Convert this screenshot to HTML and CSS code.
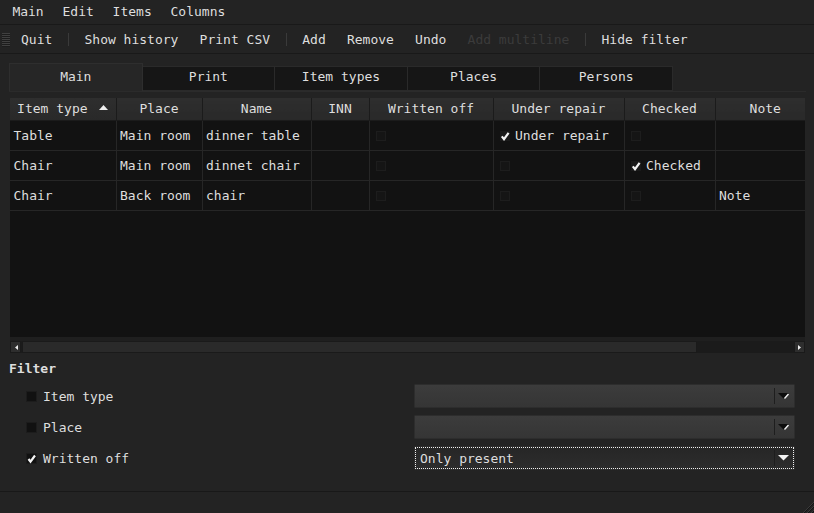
FILE: index.html
```html
<!DOCTYPE html>
<html>
<head>
<meta charset="utf-8">
<link rel="stylesheet" href="styles.css">
</head>
<body>
<div class="menubar">
  <span class="menu">Main</span><span class="menu">Edit</span><span class="menu">Items</span><span class="menu">Columns</span>
</div>
<div class="toolbar">
  <span class="grip"></span>
  <span class="tb">Quit</span><span class="sep"></span>
  <span class="tb">Show history</span><span class="tb">Print CSV</span><span class="sep"></span>
  <span class="tb">Add</span><span class="tb">Remove</span><span class="tb">Undo</span><span class="tb disabled">Add multiline</span><span class="sep"></span>
  <span class="tb">Hide filter</span>
</div>
<div class="tabs">
  <div class="tab active">Main</div>
  <div class="tab">Print</div>
  <div class="tab">Item types</div>
  <div class="tab">Places</div>
  <div class="tab">Persons</div>
</div>
<div class="pane">
  <div class="frame">
    <div class="viewport">
      <table class="grid">
        <colgroup>
          <col class="c1"><col class="c2"><col class="c3"><col class="c4"><col class="c5"><col class="c6"><col class="c7"><col class="c8">
        </colgroup>
        <thead>
          <tr>
            <th>Item type <svg class="sort" width="9" height="5" viewBox="0 0 9 5"><polygon points="0,5 9,5 4.5,0" fill="#f0f0f0"/></svg></th>
            <th>Place</th><th>Name</th><th>INN</th><th>Written off</th><th>Under repair</th><th>Checked</th><th>Note</th>
          </tr>
        </thead>
        <tbody>
          <tr>
            <td>Table</td><td>Main room</td><td>dinner table</td><td></td>
            <td><span class="cb"></span></td>
            <td><span class="cb on"><svg width="10" height="10" viewBox="0 0 10 10"><path d="M1.8 5.4 L4 8.2 L8.6 1.8" stroke="#f4f4f4" stroke-width="2.2" fill="none"/></svg></span><span class="cbl">Under repair</span></td>
            <td><span class="cb"></span></td><td></td>
          </tr>
          <tr>
            <td>Chair</td><td>Main room</td><td>dinnet chair</td><td></td>
            <td><span class="cb"></span></td>
            <td><span class="cb"></span></td>
            <td><span class="cb on"><svg width="10" height="10" viewBox="0 0 10 10"><path d="M1.8 5.4 L4 8.2 L8.6 1.8" stroke="#f4f4f4" stroke-width="2.2" fill="none"/></svg></span><span class="cbl">Checked</span></td>
            <td></td>
          </tr>
          <tr>
            <td>Chair</td><td>Back room</td><td>chair</td><td></td>
            <td><span class="cb"></span></td>
            <td><span class="cb"></span></td>
            <td><span class="cb"></span></td>
            <td>Note</td>
          </tr>
        </tbody>
      </table>
      <div class="filler"></div>
    </div>
    <div class="hscroll">
      <span class="sbtn"><svg width="4" height="5" viewBox="0 0 4 5"><polygon points="4,0 4,5 1,2.5" fill="#eee"/></svg></span>
      <span class="track"><span class="thumb"></span></span>
      <span class="sbtn"><svg width="4" height="5" viewBox="0 0 4 5"><polygon points="0,0 0,5 3,2.5" fill="#eee"/></svg></span>
    </div>
  </div>
</div>
<div class="filter">
  <div class="ftitle">Filter</div>
  <div class="fgrid">
    <label class="fcheck"><span class="fcb"></span>Item type</label>
    <div class="combo"><span class="ctext"></span><span class="cdiv"></span><svg class="carrow" width="11" height="6" viewBox="0 0 11 6"><polygon points="0,0 11,0 5.5,5.5" fill="#0c0c0c"/><path d="M6.5 5.5 L10.5 1" stroke="#f0f0f0" stroke-width="1.4"/></svg></div>
    <label class="fcheck"><span class="fcb"></span>Place</label>
    <div class="combo"><span class="ctext"></span><span class="cdiv"></span><svg class="carrow" width="11" height="6" viewBox="0 0 11 6"><polygon points="0,0 11,0 5.5,5.5" fill="#0c0c0c"/><path d="M6.5 5.5 L10.5 1" stroke="#f0f0f0" stroke-width="1.4"/></svg></div>
    <label class="fcheck"><span class="fcb"><svg width="11" height="11" viewBox="0 0 11 11"><path d="M2.5 6 L4.5 8.6 L9 2.5" stroke="#f4f4f4" stroke-width="2.2" fill="none"/></svg></span>Written off</label>
    <div class="combo focus"><span class="ctext">Only present</span><span class="cdiv"></span><svg class="carrow" width="11" height="6" viewBox="0 0 11 6"><polygon points="0,0 11,0 5.5,5.5" fill="#f4f4f4"/></svg></div>
  </div>
</div>
<div class="statusbar">
  <svg class="sizegrip" width="12" height="12" viewBox="0 0 12 12">
    <path d="M12 1 L1 12 M12 5 L5 12 M12 9 L9 12" stroke="#3a3a3a" stroke-width="1"/>
    <path d="M12 2 L2 12 M12 6 L6 12 M12 10 L10 12" stroke="#151515" stroke-width="1"/>
  </svg>
</div>
</body>
</html>
```

FILE: styles.css
```css
* { box-sizing: border-box; }
html, body { margin: 0; height: 100%; }
body {
  background: #232323;
  color: #dedede;
  font-family: "DejaVu Sans Mono", monospace;
  font-size: 13px;
  line-height: 15px;
  display: flex;
  flex-direction: column;
  overflow: hidden;
}

.menubar {
  height: 25px;
  border-bottom: 1px solid #191919;
  display: flex;
  padding-left: 3px;
  line-height: 24px;
}
.menu { padding: 0 9.4px; }

.toolbar {
  height: 29px;
  border-bottom: 1px solid #191919;
  display: flex;
  align-items: center;
  padding-top: 1px;
}
.grip {
  width: 8px;
  height: 14px;
  margin: 0 0.4px 0 2px;
  background: repeating-linear-gradient(to bottom, #404040 0 1px, #1c1c1c 1px 2px);
}
.tb { padding: 0 10.6px; }
.tb.disabled { color: #3b3b3b; }
.sep {
  width: 1px;
  height: 13px;
  background: #3a3a3a;
  margin: 0 5px;
}

.tabs {
  margin: 9px 0 0 9px;
  width: 664px;
  height: 28px;
  display: flex;
  align-items: flex-end;
}
.tab {
  flex: 1;
  height: 25px;
  line-height: 20px;
  text-align: center;
  background: #161616;
  border: 1px solid #2a2a2a;
  border-left: none;
}
.tab.active {
  height: 28px;
  line-height: 26px;
  background: #262626;
  border: 1px solid #2e2e2e;
  border-bottom: none;
}

.pane {
  margin: 0 8px 0 9px;
  padding: 6px 0 0 1px;
  border-top: 1px solid #2b2b2b;
}
.frame {
  width: 795px;
  height: 255px;
  display: flex;
  flex-direction: column;
  background: #1f1f1f;
}
.viewport {
  flex: 1;
  overflow: hidden;
  display: flex;
  flex-direction: column;
  background: #121212;
}
.grid {
  border-collapse: collapse;
  table-layout: fixed;
  width: 805px;
  flex: none;
  background: #121212;
}
.c1 { width: 106px; }
.c2 { width: 86px; }
.c3 { width: 109px; }
.c4 { width: 58px; }
.c5 { width: 124px; }
.c6 { width: 131px; }
.c7 { width: 91px; }
.c8 { width: 100px; }
.grid th {
  height: 22px;
  padding: 0;
  font-weight: normal;
  text-align: center;
  white-space: nowrap;
  background: linear-gradient(#2e2e2e, #292929);
  border-right: 1px solid #1b1b1b;
  border-bottom: 1px solid #1b1b1b;
  line-height: 21px;
}
.grid th:last-child { border-right: none; }
.sort { margin-left: 4px; vertical-align: 3px; }
.grid td {
  height: 30px;
  padding: 1px 3px 0 3.5px;
  white-space: nowrap;
  border-right: 1px solid #262626;
  border-bottom: 1px solid #262626;
  vertical-align: middle;
}
.grid td:last-child { border-right: none; }
.cb {
  display: inline-block;
  width: 10px;
  height: 10px;
  margin-left: 3px;
  vertical-align: -1px;
  background: #151515;
  border: 1px solid #1d1d1d;
}
.cb.on { background: #1a1a1a; border: none; }
.cb svg { display: block; }
.cbl { margin-left: 5px; }
.filler { flex: 1; }
.hscroll {
  margin-top: 4px;
  height: 12px;
  display: flex;
}
.sbtn {
  width: 11px;
  height: 12px;
  background: #2e2e2e;
  border: 1px solid #1a1a1a;
  display: flex;
  align-items: center;
  justify-content: center;
}
.track {
  flex: 1;
  background: #1b1b1b;
  display: flex;
}
.thumb {
  width: 675px;
  margin-left: 1px;
  height: 12px;
  background: #2a2a2a;
  border: 1px solid #1a1a1a;
}

.filter {
  flex: 1;
  padding: 8px 19px 0 9px;
}
.ftitle { font-weight: bold; }
.fgrid {
  margin: 8px 0 0 17px;
  display: grid;
  grid-template-columns: 1fr 381px;
  grid-auto-rows: 24px;
  row-gap: 7px;
}
.fcheck {
  display: flex;
  align-items: center;
  padding-top: 1px;
}
.fcb {
  width: 11px;
  height: 11px;
  margin-right: 6px;
  background: #111;
  border: 1px solid #1c1c1c;
}
.fcb svg { display: block; margin: -1px; }
.combo {
  display: flex;
  align-items: center;
  background: linear-gradient(#3c3c3c, #353535);
  border: 1px solid #2d2d2d;
  border-radius: 1px;
  padding: 0 5px 0 5px;
}
.combo.focus {
  background: linear-gradient(#262626, #2d2d2d);
  outline: 1px dotted #f0f0f0;
  outline-offset: -2px;
}
.ctext { flex: 1; padding-top: 1px; }
.cdiv {
  width: 1px;
  height: 16px;
  background: #1e1e1e;
  margin-right: 3px;
}
.carrow { display: block; }

.statusbar {
  height: 22px;
  border-top: 1px solid #181818;
  display: flex;
  justify-content: flex-end;
  align-items: flex-end;
}
.sizegrip { display: block; }
```
